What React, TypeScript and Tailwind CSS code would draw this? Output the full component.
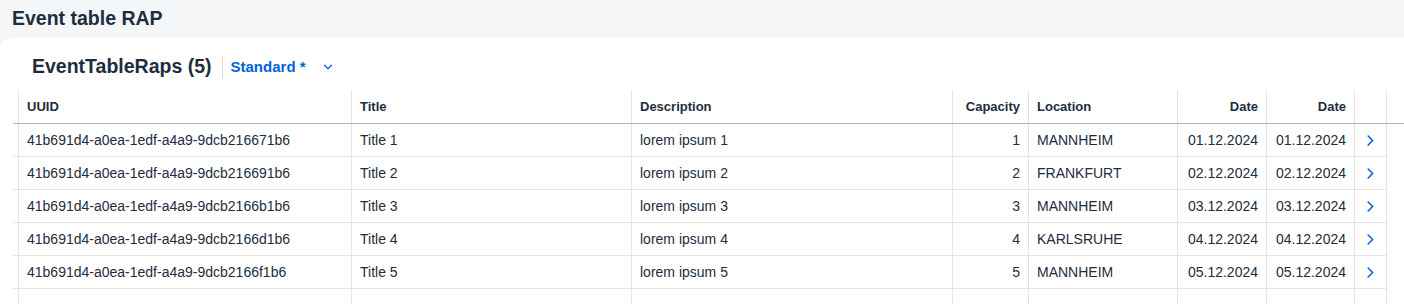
import { ChevronDown } from 'lucide-react';

type EventRow = {
  uuid: string;
  title: string;
  description: string;
  capacity: number;
  location: string;
  dateFrom: string;
  dateTo: string;
};

const rows: EventRow[] = [
  { uuid: '41b691d4-a0ea-1edf-a4a9-9dcb216671b6', title: 'Title 1', description: 'lorem ipsum 1', capacity: 1, location: 'MANNHEIM', dateFrom: '01.12.2024', dateTo: '01.12.2024' },
  { uuid: '41b691d4-a0ea-1edf-a4a9-9dcb216691b6', title: 'Title 2', description: 'lorem ipsum 2', capacity: 2, location: 'FRANKFURT', dateFrom: '02.12.2024', dateTo: '02.12.2024' },
  { uuid: '41b691d4-a0ea-1edf-a4a9-9dcb2166b1b6', title: 'Title 3', description: 'lorem ipsum 3', capacity: 3, location: 'MANNHEIM', dateFrom: '03.12.2024', dateTo: '03.12.2024' },
  { uuid: '41b691d4-a0ea-1edf-a4a9-9dcb2166d1b6', title: 'Title 4', description: 'lorem ipsum 4', capacity: 4, location: 'KARLSRUHE', dateFrom: '04.12.2024', dateTo: '04.12.2024' },
  { uuid: '41b691d4-a0ea-1edf-a4a9-9dcb2166f1b6', title: 'Title 5', description: 'lorem ipsum 5', capacity: 5, location: 'MANNHEIM', dateFrom: '05.12.2024', dateTo: '05.12.2024' },
];

// gutter, UUID, Title, Description, Capacity, Location, Date, Date, nav
const cols = 'grid grid-cols-[5px_333px_280px_321px_76px_149px_89px_88px_33px]';
const cell = 'border-l border-[#e5e5e5] px-2 flex items-center truncate';

function NavArrow() {
  return (
    <svg width="7" height="11" viewBox="0 0 7 11" fill="none">
      <path d="M1.2 1 L5.6 5.5 L1.2 10" stroke="#0064d9" strokeWidth="1.6" strokeLinecap="round" strokeLinejoin="round" />
    </svg>
  );
}

export default function App() {
  return (
    <div className="w-[1404px] h-[304px] overflow-hidden bg-[#f5f6f7] text-[#1d2d3e] font-['Liberation_Sans',Arial,sans-serif]">
      <div className="h-[38px] px-3 flex items-center">
        <h1 className="text-[19.5px] font-bold leading-none">Event table RAP</h1>
      </div>

      <div className="bg-white rounded-tl-[12px] h-[266px]">
        {/* toolbar */}
        <div className="pl-[32px] pt-[14px] pb-[8px] h-[52px] flex items-center">
          <h2 className="text-[19.5px] font-bold">EventTableRaps (5)</h2>
          <div className="w-px h-[23px] bg-[#d9d9d9] ml-[10px] mr-[8px]" />
          <button className="flex items-center text-[#0064d9] text-[15px] font-bold">
            Standard *
            <ChevronDown className="ml-[15px] w-[14px] h-[14px]" strokeWidth={2.2} />
          </button>
        </div>

        {/* table */}
        <div className="pl-[13px] text-[14px]">
          <div className="border-b border-[#a8b3bd]">
            <div className={`${cols} h-[33px] text-[13px] font-bold`}>
              <div />
              <div className={cell}>UUID</div>
              <div className={cell}>Title</div>
              <div className={cell}>Description</div>
              <div className={`${cell} justify-end`}>Capacity</div>
              <div className={cell}>Location</div>
              <div className={`${cell} justify-end`}>Date</div>
              <div className={`${cell} justify-end`}>Date</div>
              <div className={`${cell} border-r`} />
            </div>
          </div>

          {rows.map((row) => (
            <div key={row.uuid} className={`${cols} h-[33px] w-[1374px] border-b border-[#e5e5e5]`}>
              <div />
              <div className={cell}>{row.uuid}</div>
              <div className={cell}>{row.title}</div>
              <div className={cell}>{row.description}</div>
              <div className={`${cell} justify-end`}>{row.capacity}</div>
              <div className={cell}>{row.location}</div>
              <div className={`${cell} justify-end`}>{row.dateFrom}</div>
              <div className={`${cell} justify-end`}>{row.dateTo}</div>
              <div className={`${cell} border-r justify-center`}>
                <NavArrow />
              </div>
            </div>
          ))}

          {/* empty filler row */}
          <div className={`${cols} h-[33px] w-[1374px]`}>
            <div />
            <div className={cell} />
            <div className={cell} />
            <div className={cell} />
            <div className={cell} />
            <div className={cell} />
            <div className={cell} />
            <div className={cell} />
            <div className={`${cell} border-r`} />
          </div>
        </div>
      </div>
    </div>
  );
}
